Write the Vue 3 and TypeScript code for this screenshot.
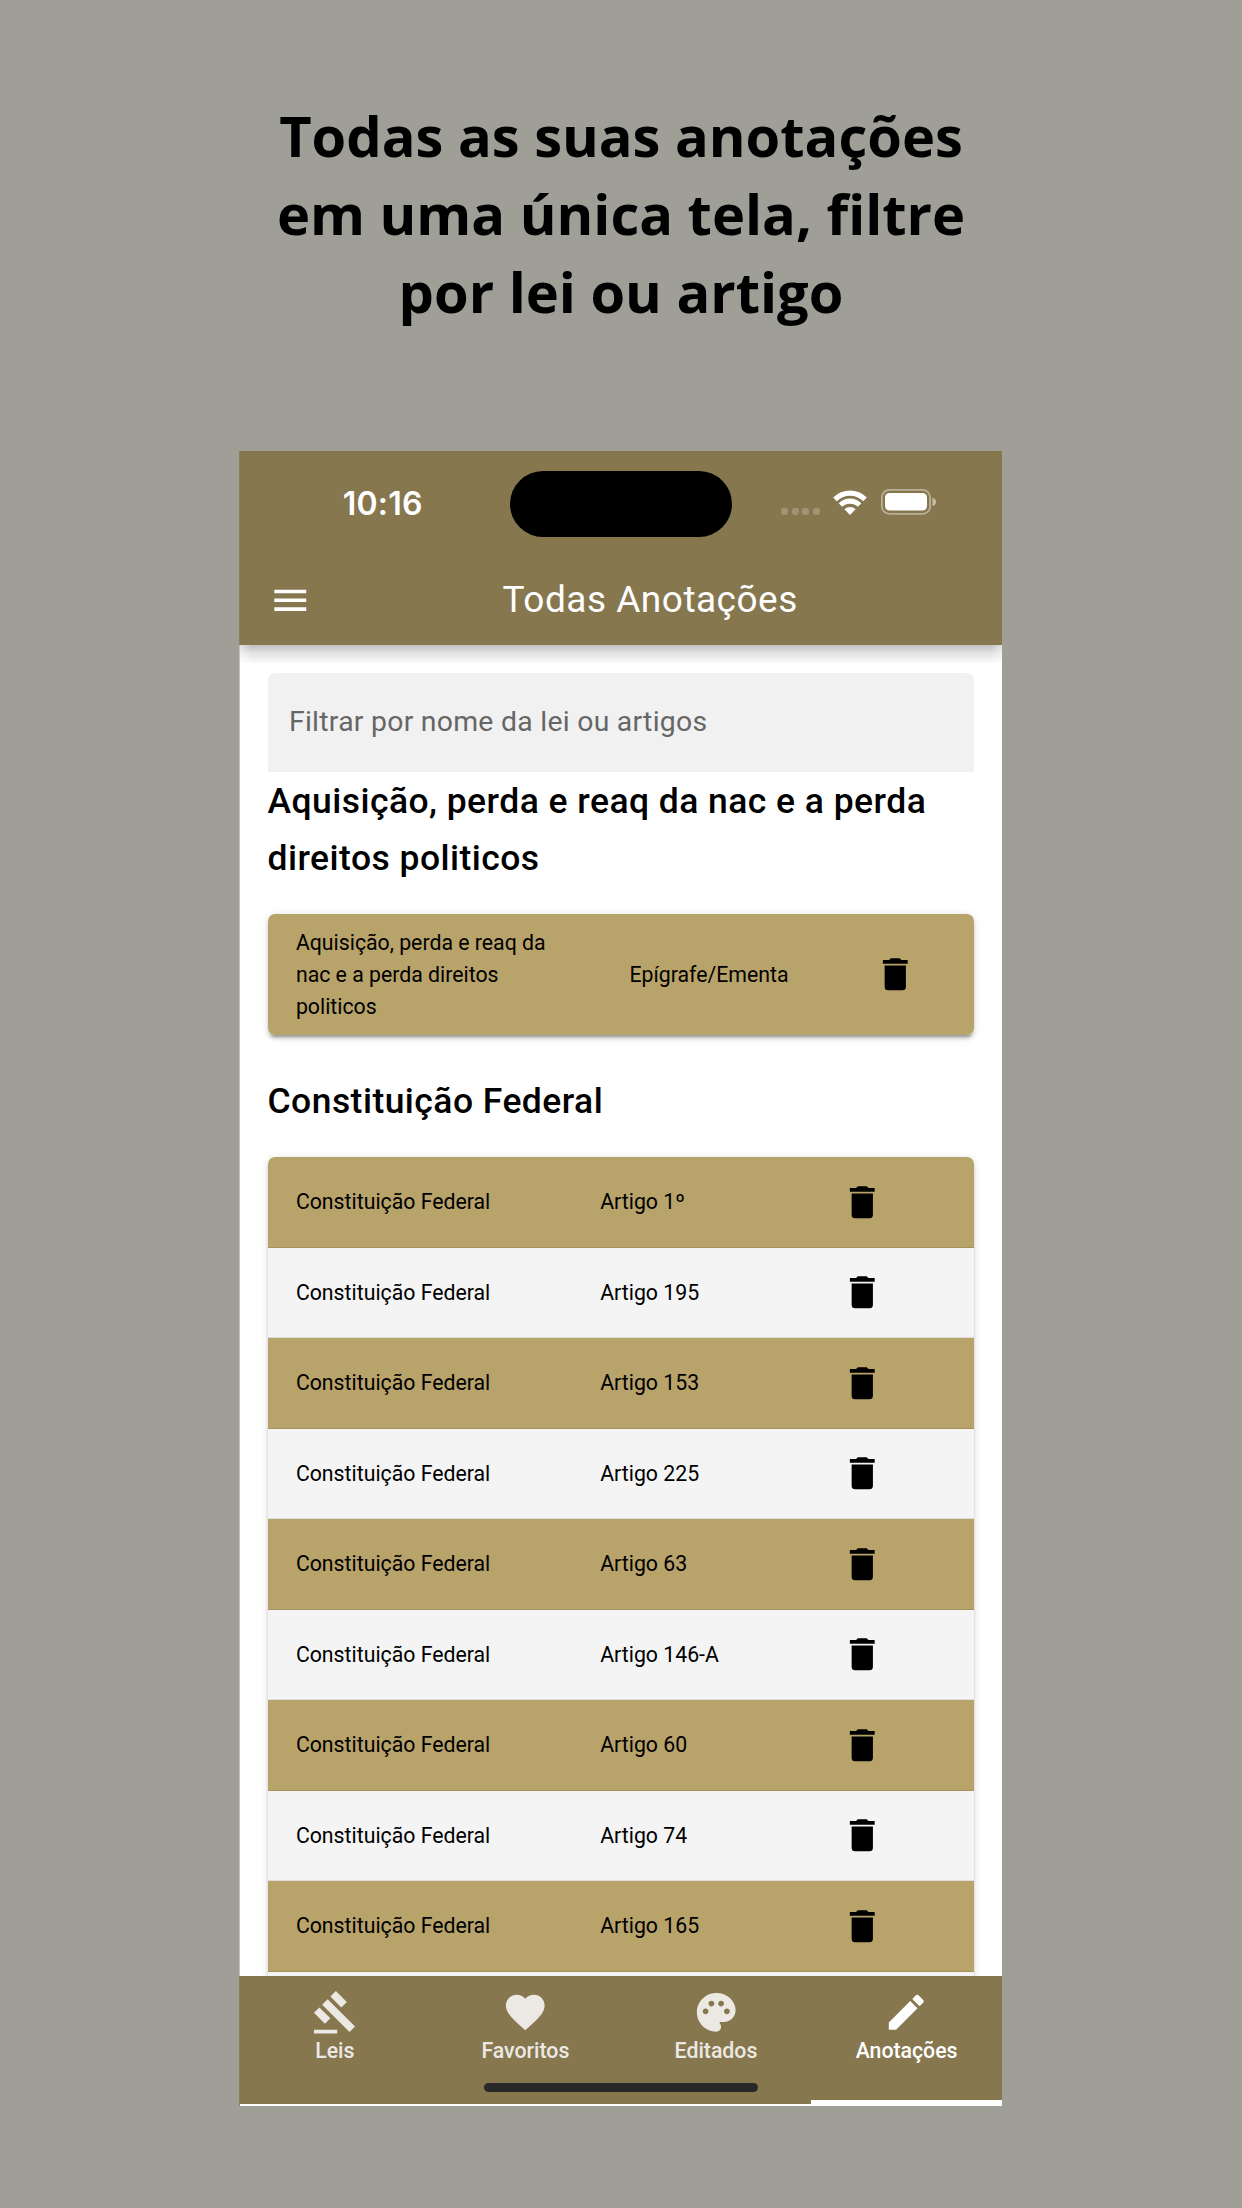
<script setup lang="ts">
interface Note {
  law: string
  article: string
}

interface Tab {
  label: string
  icon: string
  active?: boolean
}

const trash =
  'M19,4H15.5L14.5,3H9.5L8.5,4H5V6H19M6,19A2,2 0 0,0 8,21H16A2,2 0 0,0 18,19V7H6V19Z'

const articles: string[] = ['1º', '195', '153', '225', '63', '146-A', '60', '74', '165']
const notes: Note[] = articles.map((a) => ({ law: 'Constituição Federal', article: `Artigo ${a}` }))

const tabs: Tab[] = [
  {
    label: 'Leis',
    icon: 'M1 21h12v2H1zM5.245 8.07l2.83-2.827 14.14 14.142-2.828 2.828zM12.317 1l5.657 5.656-2.83 2.83-5.654-5.66zM3.825 9.485l5.657 5.657-2.828 2.828-5.657-5.657z',
  },
  {
    label: 'Favoritos',
    icon: 'M12,21.35L10.55,20.03C5.4,15.36 2,12.28 2,8.5C2,5.42 4.42,3 7.5,3C9.24,3 10.91,3.81 12,5.09C13.09,3.81 14.76,3 16.5,3C19.58,3 22,5.42 22,8.5C22,12.28 18.6,15.36 13.45,20.04L12,21.35Z',
  },
  {
    label: 'Editados',
    icon: 'M12 2C6.49 2 2 6.49 2 12s4.49 10 10 10c1.38 0 2.5-1.12 2.5-2.5 0-.61-.23-1.2-.64-1.67-.08-.1-.13-.21-.13-.33 0-.28.22-.5.5-.5H16c3.31 0 6-2.69 6-6 0-4.96-4.49-9-10-9zm5.5 11c-.83 0-1.5-.67-1.5-1.5s.67-1.5 1.5-1.5 1.5.67 1.5 1.5-.67 1.5-1.5 1.5zm-3-4c-.83 0-1.5-.67-1.5-1.5S13.67 6 14.5 6s1.5.67 1.5 1.5S15.33 9 14.5 9zM5 11.5c0-.83.67-1.5 1.5-1.5s1.5.67 1.5 1.5S7.33 13 6.5 13 5 12.33 5 11.5zm6-4c0 .83-.67 1.5-1.5 1.5S8 8.33 8 7.5 8.67 6 9.5 6s1.5.67 1.5 1.5z',
  },
  {
    label: 'Anotações',
    icon: 'M20.71,7.04C21.1,6.65 21.1,6 20.71,5.63L18.37,3.29C18,2.9 17.35,2.9 16.96,3.29L15.12,5.12L18.87,8.87M3,17.25V21H6.75L17.81,9.93L14.06,6.18L3,17.25Z',
    active: true,
  },
]
</script>

<template>
  <main class="page">
    <h1 class="headline">Todas as suas anotações<br />em uma única tela, filtre<br />por lei ou artigo</h1>

    <section class="phone">
      <header class="header">
        <div class="status">
          <span class="time">10:16</span>
          <span class="island"></span>
          <div class="signals">
            <span class="dots"><i v-for="n in 4" :key="n"></i></span>
            <svg class="wifi" viewBox="0 0 34 25">
              <path d="M0.2 7.4A24 24 0 0 1 33.8 7.4L30.3 11.2A19.2 19.2 0 0 0 3.7 11.2Z" />
              <path d="M5.7 13.2A16 16 0 0 1 28.3 13.2L24.9 16.8A11.5 11.5 0 0 0 9.1 16.8Z" />
              <path d="M11.4 19.3A8 8 0 0 1 22.6 19.3L17 25Z" />
            </svg>
            <svg class="battery" viewBox="0 0 56 26">
              <rect x="0.9" y="0.9" width="48.2" height="24" rx="7.5" fill="none" stroke="#fff" stroke-opacity="0.42" stroke-width="1.8" />
              <rect x="4" y="4" width="42" height="17.6" rx="4.6" fill="#fff" />
              <path d="M51.4 8.8C54.2 9.6 55 11.2 55 12.9S54.2 16.2 51.4 17Z" fill="#fff" fill-opacity="0.5" />
            </svg>
          </div>
        </div>
        <div class="toolbar">
          <svg class="icon" viewBox="0 0 24 24"><path d="M3,6H21V8H3V6M3,11H21V13H3V11M3,16H21V18H3V16Z" /></svg>
          <span class="title">Todas Anotações</span>
        </div>
      </header>

      <div class="content">
        <input class="filter" type="text" placeholder="Filtrar por nome da lei ou artigos" />

        <h2 class="law">Aquisição, perda e reaq da nac e a perda direitos politicos</h2>
        <div class="card">
          <div class="row tall">
            <span class="name">Aquisição, perda e reaq da nac e a perda direitos politicos</span>
            <span>Epígrafe/Ementa</span>
            <svg class="icon" viewBox="0 0 24 24"><path :d="trash" /></svg>
          </div>
        </div>

        <h2 class="law second">Constituição Federal</h2>
        <div class="card list">
          <div v-for="note in notes" :key="note.article" class="row">
            <span>{{ note.law }}</span>
            <span>{{ note.article }}</span>
            <svg class="icon" viewBox="0 0 24 24"><path :d="trash" /></svg>
          </div>
          <div class="row"></div>
        </div>
      </div>

      <nav class="tabs">
        <div v-for="tab in tabs" :key="tab.label" class="tab" :class="{ active: tab.active }">
          <svg class="tab-icon" viewBox="0 0 24 24"><path :d="tab.icon" fill-rule="evenodd" /></svg>
          <span>{{ tab.label }}</span>
        </div>
        <span class="home"></span>
      </nav>
    </section>
  </main>
</template>

<style>
body {
  margin: 0;
  background: #9f9e97;
}
</style>

<style scoped>
* {
  box-sizing: border-box;
}

.page {
  height: 2208px;
  overflow: hidden;
  background: #9f9e97;
  font-family: Roboto, 'Liberation Sans', sans-serif;
  color: #000;
}

.headline {
  margin: 0;
  padding-top: 96px;
  height: 451px;
  font: 700 56px/78px 'Open Sans', 'Noto Sans', sans-serif;
  text-align: center;
}

.phone {
  display: flex;
  flex-direction: column;
  width: 762.4px;
  height: 1655px;
  margin-left: 239.5px;
  background: #fff;
  box-shadow: -1px 0 0 #c4c3bf;
}

.header {
  position: relative;
  z-index: 1;
  flex: none;
  height: 193.5px;
  background: #86774f;
  color: #fff;
  box-shadow: -1px 0 0 #8b7f58;
}

.header::after {
  content: '';
  position: absolute;
  top: 100%;
  left: 0;
  right: 0;
  height: 18px;
  background: linear-gradient(rgba(0, 0, 0, 0.25), rgba(0, 0, 0, 0.11) 45%, rgba(0, 0, 0, 0.02));
  -webkit-mask: linear-gradient(90deg, transparent -12px, #000 12px, #000 calc(100% - 12px), transparent calc(100% + 12px));
  mask: linear-gradient(90deg, transparent -12px, #000 12px, #000 calc(100% - 12px), transparent calc(100% + 12px));
}

.status {
  display: grid;
  grid-template-columns: 270px 222.5px 270px;
  height: 105px;
  padding-top: 20px;
}

.time {
  padding-left: 103.3px;
  font: 600 32px/65px Inter, sans-serif;
  letter-spacing: 0.2px;
}

.island {
  height: 65.5px;
  border-radius: 33px;
  background: #000;
}

.signals {
  display: flex;
  padding: 18px 0 0 49px;
}

.dots {
  display: flex;
  gap: 3.7px;
  margin: 19px 13px 0 0;
}

.dots i {
  width: 7px;
  height: 7px;
  border-radius: 2.4px;
  background: rgba(255, 255, 255, 0.22);
}

.wifi {
  width: 34px;
  height: 25px;
  margin: 0.5px 13.5px 0 0;
  fill: #fff;
}

.battery {
  width: 56px;
  height: 26px;
}

.toolbar {
  display: flex;
  align-items: center;
  height: 88px;
  padding-left: 29px;
}

.icon {
  width: 42.56px;
  height: 42.56px;
  fill: currentColor;
}

.title {
  margin: -2px 0 0 191.5px;
  font-size: 37px;
  letter-spacing: 0.5px;
  white-space: nowrap;
}

.content {
  display: flex;
  flex: 1;
  flex-direction: column;
  min-height: 0;
  overflow: hidden;
  padding: 28px 28px 0;
}

.filter {
  flex: none;
  width: 100%;
  height: 99.4px;
  padding: 0 21.5px 1px;
  border: 0;
  border-radius: 7px 7px 0 0;
  outline: 0;
  background: #f1f1f1;
  font: 400 28.37px Roboto, sans-serif;
  letter-spacing: 0.27px;
}

.filter::placeholder {
  color: #666;
  opacity: 1;
}

.law {
  flex: none;
  margin: 1.4px 0 27.2px;
  font-size: 35.47px;
  font-weight: 500;
  line-height: 56.74px;
  letter-spacing: 0.46px;
}

.law.second {
  margin-top: 37.9px;
}

.card {
  flex: none;
  overflow: hidden;
  border-radius: 7px;
  box-shadow:
    0 5.3px 1.8px -3.5px rgba(0, 0, 0, 0.2),
    0 3.5px 3.5px rgba(0, 0, 0, 0.14),
    0 1.8px 8.9px rgba(0, 0, 0, 0.12);
}

.row {
  display: grid;
  grid-template-columns: 304.3px 241.2px auto;
  align-items: center;
  height: 90.5px;
  padding-left: 28.4px;
  border-bottom: 1.8px solid #dcdcdc;
  background: #f4f4f4;
  font-size: 21.28px;
  line-height: 31.92px;
}

.row span {
  padding-top: 0.7px;
}

.row:nth-child(odd) {
  border-color: #a59260;
  background: #b8a36b;
}

.row.tall {
  grid-template-columns: 333.6px 245px auto;
  height: 121.4px;
  border: 0;
}

.name {
  width: 265px;
}

.tabs {
  position: relative;
  display: flex;
  flex: none;
  height: 129.8px;
  background: #86774f;
  box-shadow: -1px 0 0 #8b7f58;
}

.tab {
  display: flex;
  flex: 1;
  flex-direction: column;
  align-items: center;
  padding-top: 13px;
  border-bottom: 2px solid #fff;
  color: #ece9e4;
  font-size: 21.28px;
  font-weight: 500;
  line-height: 30px;
}

.tab.active {
  border-bottom-width: 6px;
  color: #fff;
}

.tab-icon {
  width: 46.5px;
  height: 46.5px;
  margin-bottom: 0.5px;
  fill: currentColor;
}

.home {
  position: absolute;
  left: 244.5px;
  bottom: 14px;
  width: 273.5px;
  height: 9px;
  border-radius: 4.5px;
  background: #282828;
}
</style>
